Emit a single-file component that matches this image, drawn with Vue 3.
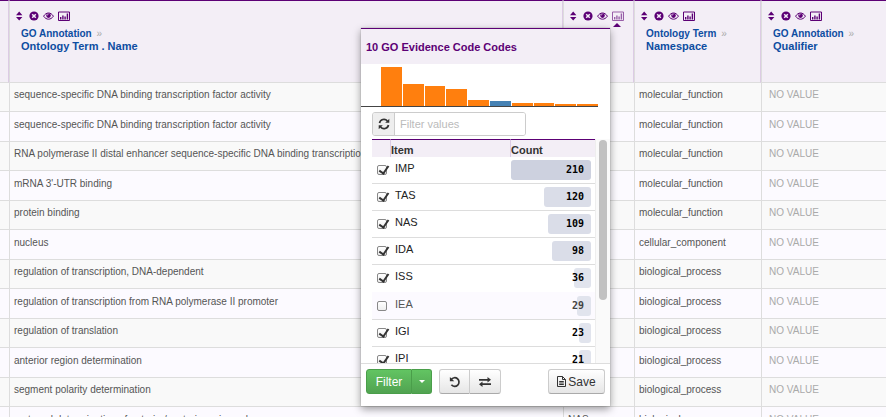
<script setup>
import { ref } from 'vue'

const icons = ['sort', 'remove', 'eye', 'summary']
const columns = [
  { key: 'name', parent: 'GO Annotation', title: 'Ontology Term . Name' },
  { key: 'code', parent: '', title: '' },
  { key: 'ns', parent: 'Ontology Term', title: 'Namespace' },
  { key: 'qual', parent: 'GO Annotation', title: 'Qualifier' }
]
const mf = 'molecular_function'
const bp = 'biological_process'
const rows = [
  ['sequence-specific DNA binding transcription factor activity', '', mf],
  ['sequence-specific DNA binding transcription factor activity', '', mf],
  ['RNA polymerase II distal enhancer sequence-specific DNA binding transcription factor activity', '', mf],
  ["mRNA 3'-UTR binding", '', mf],
  ['protein binding', '', mf],
  ['nucleus', '', 'cellular_component'],
  ['regulation of transcription, DNA-dependent', '', bp],
  ['regulation of transcription from RNA polymerase II promoter', '', bp],
  ['regulation of translation', '', bp],
  ['anterior region determination', '', bp],
  ['segment polarity determination', '', bp],
  ['maternal determination of anterior/posterior axis, embryo', 'NAS', bp]
]
const items = ref([
  { name: 'IMP', count: 210, on: true },
  { name: 'TAS', count: 120, on: true },
  { name: 'NAS', count: 109, on: true },
  { name: 'IDA', count: 98, on: true },
  { name: 'ISS', count: 36, on: true },
  { name: 'IEA', count: 29, on: false },
  { name: 'IGI', count: 23, on: true },
  { name: 'IPI', count: 21, on: true }
])
const bars = [39, 22, 20, 17, 6, 5, 3, 3, 2, 2]
const filter = ref('')
</script>

<template>
  <div class="page">
    <table class="results">
      <colgroup>
        <col class="c-edge" /><col /><col class="c-code" /><col class="c-ns" /><col class="c-qual" />
      </colgroup>
      <thead>
        <tr>
          <th></th>
          <th v-for="c in columns" :key="c.key">
            <div class="tools">
              <button v-for="i in icons" :key="i" :class="['tool', { open: c.key === 'code' && i === 'summary' }]" :aria-label="i">
                <svg v-if="i === 'sort'" width="9" height="10" viewBox="0 0 9 10"><path d="M0 4.2 3.2.6l3.2 3.6zM0 6h6.4L3.2 9.6z" /></svg>
                <svg v-else-if="i === 'remove'" width="10" height="10" viewBox="0 0 10 10"><circle cx="5" cy="5" r="4.6" /><path class="cut" d="m3.2 3.2 3.6 3.6m0-3.6L3.2 6.8" /></svg>
                <svg v-else-if="i === 'eye'" width="11" height="10" viewBox="0 0 11 10"><path class="line" d="M.6 5.2C3.2.9 7.8.9 10.4 5.2 7.8 9.2 3.2 9.2.6 5.2z" /><circle cx="5.5" cy="4.6" r="2.3" /><path class="glint" d="M4.2 4.5q0-1.3 1.3-1.3" /></svg>
                <svg v-else width="12" height="10" viewBox="0 0 12 10"><path class="line" d="M.5 1h11v8.5H.5z" /><path d="M2 6h1.4v2.5H2zM4.2 4.4h1.4v4.1H4.2zM6.4 5.4h1.4v3.1H6.4zM8.7 2.6h1.4v5.9H8.7z" /></svg>
              </button>
            </div>
            <a v-if="c.title" href="#" class="path">
              <span class="parent">{{ c.parent }} <i>»</i></span>
              <span class="title">{{ c.title }}</span>
            </a>
          </th>
        </tr>
      </thead>
      <tbody>
        <tr v-for="(r, n) in rows" :key="n">
          <td></td>
          <td>{{ r[0] }}</td>
          <td>{{ r[1] }}</td>
          <td>{{ r[2] }}</td>
          <td class="none">NO VALUE</td>
        </tr>
      </tbody>
    </table>

    <section class="popup">
      <h3>10 GO Evidence Code Codes</h3>
      <div class="chart">
        <span v-for="(b, n) in bars" :key="n" :class="{ off: n === 5 }" :style="{ height: b + 'px' }"></span>
      </div>
      <div class="search">
        <button aria-label="Reset filter">
          <svg width="12" height="12" viewBox="0 0 12 12"><path class="stroke" d="M1.5 5A4.5 4.5 0 0 1 9.4 3M10.5 7a4.5 4.5 0 0 1-7.9 2" /><path d="M11.3.8v4H7.2zM.7 11.2v-4h4.1z" /></svg>
        </button>
        <input v-model="filter" type="text" placeholder="Filter values" aria-label="Filter values" />
      </div>
      <div class="scroller">
        <table class="items">
          <colgroup><col class="c-check" /><col /><col class="c-count" /></colgroup>
          <thead><tr><th></th><th>Item</th><th>Count</th></tr></thead>
          <tbody>
            <tr v-for="it in items" :key="it.name" :class="{ unchecked: !it.on }">
              <td><input :id="'i-' + it.name" v-model="it.on" type="checkbox" /></td>
              <td><label :for="'i-' + it.name">{{ it.name }}</label></td>
              <td>
                <div class="count" :class="{ big: it.count > 200, small: it.count < 50 }">
                  <div class="fill" :style="{ width: `calc(4px + ${(it.count / 210) * 95}%)` }"></div>
                  <span>{{ it.count }}</span>
                </div>
              </td>
            </tr>
          </tbody>
        </table>
        <div class="track"><div class="thumb"></div></div>
      </div>
      <footer>
        <div class="group green">
          <button>Filter</button>
          <button class="caret" aria-label="More filter options"><svg width="6" height="3" viewBox="0 0 6 3"><path d="M0 0h6L3 3z" /></svg></button>
        </div>
        <div class="group">
          <button aria-label="Undo"><svg width="12" height="12" viewBox="0 0 12 12"><path class="stroke" d="M2.2 3.5A4.3 4.3 0 1 1 2.4 8.8" /><path d="M.9.9v4.4h4.4z" /></svg></button>
          <button aria-label="Swap selection"><svg width="12" height="10" viewBox="0 0 12 10"><path class="stroke" d="M0 2.8h9M3 7.2h9" /><path d="M8.5 0 12 2.8 8.5 5.6zM3.5 4.4 0 7.2 3.5 10z" /></svg></button>
        </div>
        <button class="save"><svg width="9" height="11" viewBox="0 0 9 11"><path class="thin" d="M.5.5h5l3 3v7h-8zM5.5.5v3h3M2.2 5.5h4.6M2.2 7h4.6M2.2 8.5h4.6" /></svg>Save</button>
      </footer>
    </section>
  </div>
</template>

<style>
body { overflow: hidden; }
</style>

<style scoped>
.page { position: relative; height: 100vh; overflow: hidden; font: 11px/20px "Liberation Sans", Arial, sans-serif; color: #555; }
* { box-sizing: border-box; }
button { font: inherit; color: inherit; margin: 0; padding: 0; border: 0; background: none; }
svg { display: block; fill: currentColor; }
table { border-collapse: separate; border-spacing: 0; table-layout: fixed; width: 100%; }

.c-edge { width: 9px; }
.c-code { width: 71px; }
.c-ns { width: 127px; }
.c-qual { width: 125px; }
.results th { height: 83px; padding: 10px 5px 0 6px; vertical-align: top; text-align: left; background: #f3eef6; border-top: 1px solid #5c0075; border-left: 1px solid #ddd; border-right: 1px solid #dccbe4; border-bottom: 1px solid #ddd; }
.results th:first-child { padding: 0; border-left: 0; }
.results th:last-child { border-right: 0; }
.results td { height: 29px; padding: 0 4px 4px; border-left: 1px solid #ddd; border-bottom: 1px solid #ddd; background: #f9f9f9; font-size: 10px; white-space: nowrap; overflow: hidden; }
.results td:first-child { border-left: 0; }
.results tr:nth-child(even) td { height: 30px; background: #fcfaff; }
.results .none { padding-left: 7px; color: #aaa; }

.tools { display: flex; align-items: center; gap: 4px; height: 10px; color: #5c0075; }
.tool { position: relative; }
.open svg { opacity: .6; }
.open::after { content: ""; position: absolute; left: 1px; top: 12px; border: 4px solid transparent; border-top: 0; border-bottom-color: #5c0075; }
.cut { stroke: #f3eef6; stroke-width: 1.5; }
.line { fill: none; stroke: currentColor; }
.glint { fill: none; stroke: #f3eef6; stroke-width: .7; }
.path { display: block; margin: 7px 0 0 5px; text-decoration: none; color: #0d4da1; font-weight: bold; line-height: 12px; }
.path span { display: block; white-space: nowrap; }
.parent { font-size: 10px; }
.parent i { font-style: normal; font-weight: normal; color: #aaa; margin-left: 2px; }

.popup { position: absolute; left: 361px; top: 28px; width: 249px; background: #fff; box-shadow: 0 0 1px #888, 0 3px 8px rgba(0, 0, 0, .4); color: #333; }
.popup h3 { margin: 0; height: 36px; padding: 0 5px; border-top: 1px solid #5c0075; background: #f3eef6; color: #5c0075; font-size: 11px; line-height: 37px; }
.chart { display: flex; align-items: flex-end; gap: 1px; height: 43px; margin-right: 12px; padding-left: 20px; border-bottom: 1px solid #444; }
.chart span { flex: 1; background: #ff7f0e; }
.chart .off { background: #4682b4; }
.search { display: flex; width: 154px; height: 24px; margin: 5px 0 3px 11px; border: 1px solid #ccc; border-radius: 3px; overflow: hidden; }
.search button { display: grid; place-items: center; width: 22px; background: #eee; border-right: 1px solid #ccc; }
.search input { flex: 1; min-width: 0; border: 0; padding: 0 5px; font: inherit; outline: 0; }
.search input::placeholder { color: #bbb; opacity: 1; }
.stroke { fill: none; stroke: currentColor; stroke-width: 1.7; }
.thin { fill: none; stroke: currentColor; }

.scroller { display: flex; align-items: flex-start; height: 225px; padding-left: 11px; overflow: hidden; border-bottom: 1px solid #ddd; }
.items { flex: 1; }
.c-check { width: 18px; }
.c-count { width: 85px; }
.items th { height: 18px; padding: 4px 0 1px; border-top: 1px solid #5c0075; border-left: 1px solid #dccbe4; background: #f3eef6; text-align: left; line-height: 12px; }
.items th:first-child { border-left: 0; }
.items td { height: 27px; padding: 0; vertical-align: top; border-bottom: 1px solid #ddd; color: #222; }
.items tr:has(+ .unchecked) td { height: 28px; border-bottom-color: #fcfaff; }
.items td:nth-child(2) { padding: 1px 5px 0; }
.items td:last-child { padding: 3px 4px 0 1px; }
.items .unchecked td { background: #fcfaff; color: #555; }
.items input { appearance: none; display: block; position: relative; width: 10px; height: 10px; margin: 8px 0 0 5px; border: 1px solid #888; border-radius: 2px; background: linear-gradient(#fff, #eee); }
.items input:checked::after { content: ""; position: absolute; left: 3px; top: -2px; width: 4px; height: 8px; border: solid #333; border-width: 0 2px 2px 0; transform: rotate(35deg); }
.count { position: relative; display: flex; justify-content: flex-end; height: 20px; }
.fill { height: 20px; border-radius: 3px; background: #dadde8; }
.big .fill { background: #cdd1df; }
.small .fill { background: #e1e4ed; }
.count span { position: absolute; right: 7px; top: 0; color: #000; font: bold 10px/19px "DejaVu Sans Mono", monospace; }
.unchecked .count span { color: #444; }
.track { width: 15px; height: 225px; padding: 1px 3px; background: #fafafa; border-left: 1px solid #eee; }
.thumb { height: 160px; border-radius: 4px; background: #c1c1c1; }

footer { display: flex; gap: 7px; padding: 5px 5px 12px; }
.group { display: flex; }
.group button, .save { display: flex; align-items: center; justify-content: center; gap: 2px; height: 25px; border: 1px solid #ccc; border-bottom-color: #aaa; background: linear-gradient(#fff, #e6e6e6); font-size: 12px; }
.group button { width: 31px; }
.group button:first-child { border-radius: 3px 0 0 3px; }
.group button:last-child { border-radius: 0 3px 3px 0; border-left: 0; }
.green button { background: linear-gradient(#62c462, #51a351); border-color: #4a9e4a; color: #fff; }
.green button:first-child { width: 46px; }
.green .caret { width: 20px; }
.save { width: 57px; margin-left: auto; border-radius: 3px; }
</style>
